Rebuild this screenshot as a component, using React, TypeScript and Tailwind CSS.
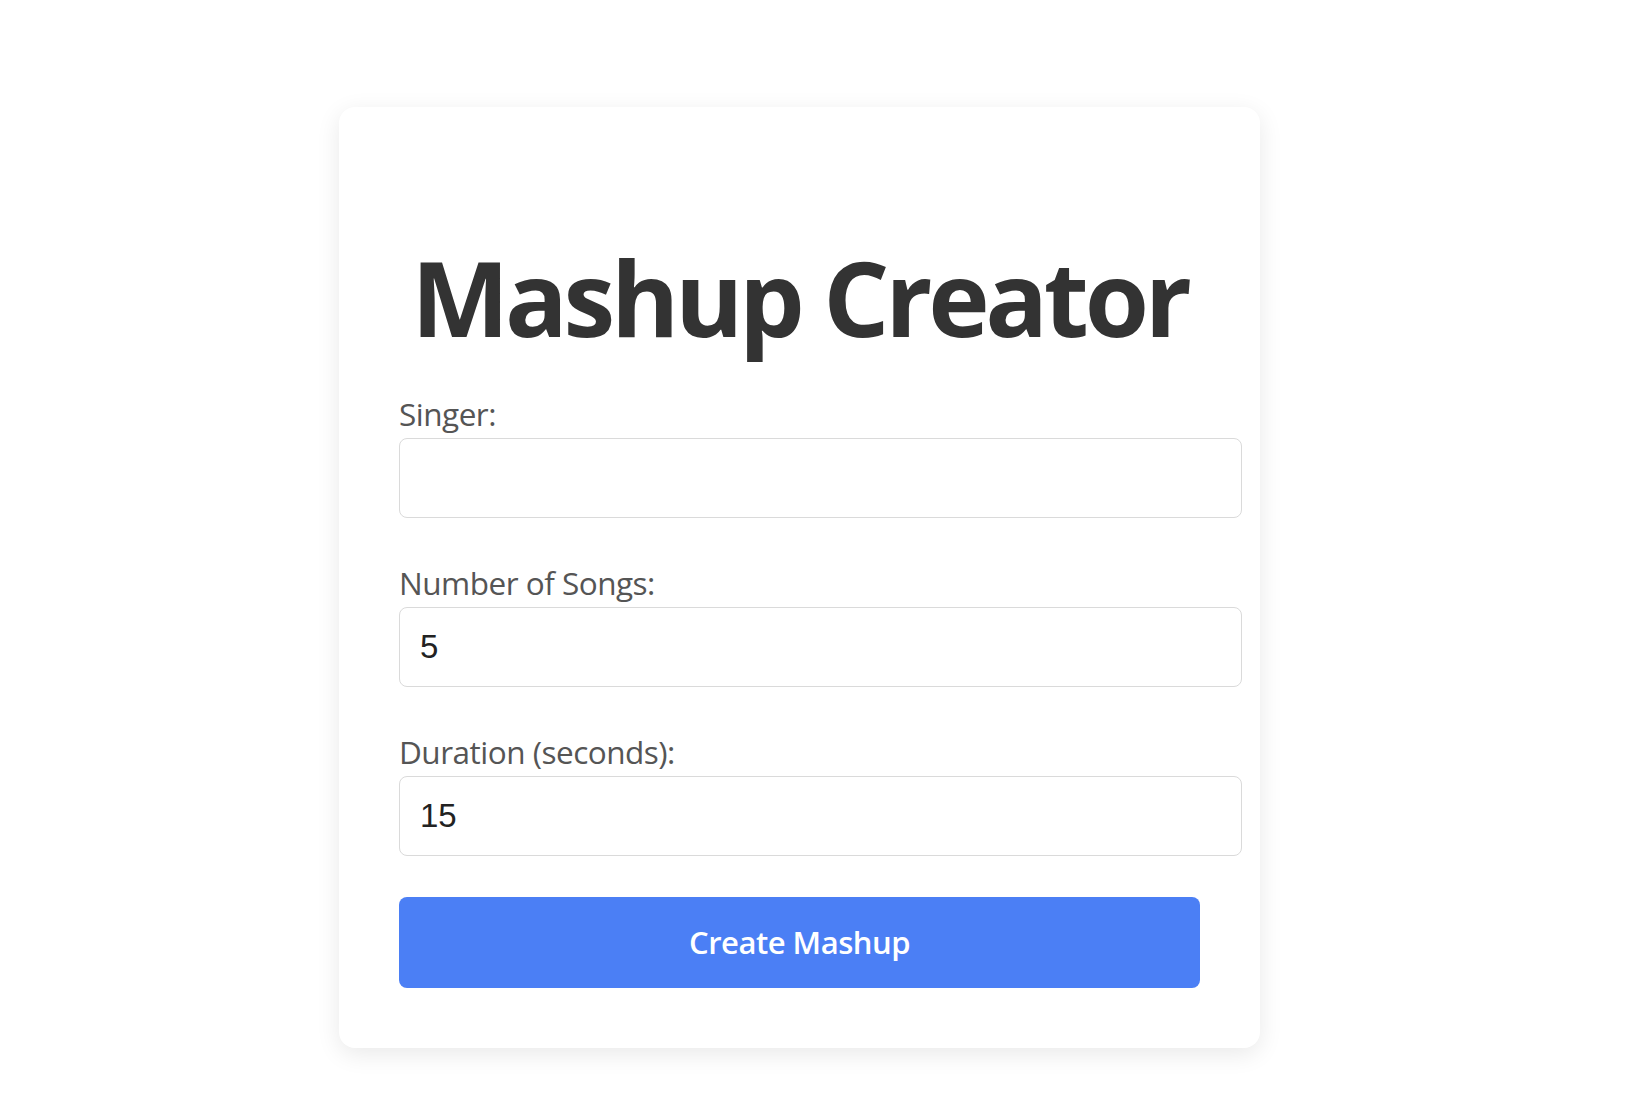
import React from "react";

const sans = { fontFamily: '"Open Sans", "Noto Sans", sans-serif' };
const arial = { fontFamily: '"Liberation Sans", Arial, sans-serif' };

function Field({ label, value, last }: { label: string; value: string; last?: boolean }) {
  return (
    <div className={last ? "mb-[41px]" : "mb-[45px]"}>
      <label
        className="block text-[31.5px] leading-[40px] tracking-[-0.5px] text-[#555] mb-[4px]"
        style={sans}
      >
        {label}
      </label>
      <input
        type="text"
        defaultValue={value}
        className="box-content block w-full h-[38px] py-[20px] px-[20px] border-[1.5px] border-[#dadada] rounded-lg text-[33px] text-[#222] outline-none"
        style={arial}
      />
    </div>
  );
}

export default function App() {
  return (
    <div className="min-h-screen bg-white">
      <div className="pl-[339px] pt-[107px] pb-[67px]">
        <div className="w-[921px] bg-white rounded-2xl p-[60px] shadow-[0_6px_24px_rgba(0,0,0,0.09)]">
          <div className="w-[801px]">
            <h1
              className="text-center whitespace-nowrap font-bold text-[104px] leading-none tracking-[-4.3px] text-[#333] mt-[78px] mb-[45px]"
              style={sans}
            >
              Mashup Creator
            </h1>
            <Field label="Singer:" value="" />
            <Field label="Number of Songs:" value="5" />
            <Field label="Duration (seconds):" value="15" last />
            <button
              className="block w-full h-[91px] rounded-lg bg-[#4b7ff5] text-white text-[31px] tracking-[-0.5px] font-semibold"
              style={sans}
            >
              Create Mashup
            </button>
          </div>
        </div>
      </div>
    </div>
  );
}
